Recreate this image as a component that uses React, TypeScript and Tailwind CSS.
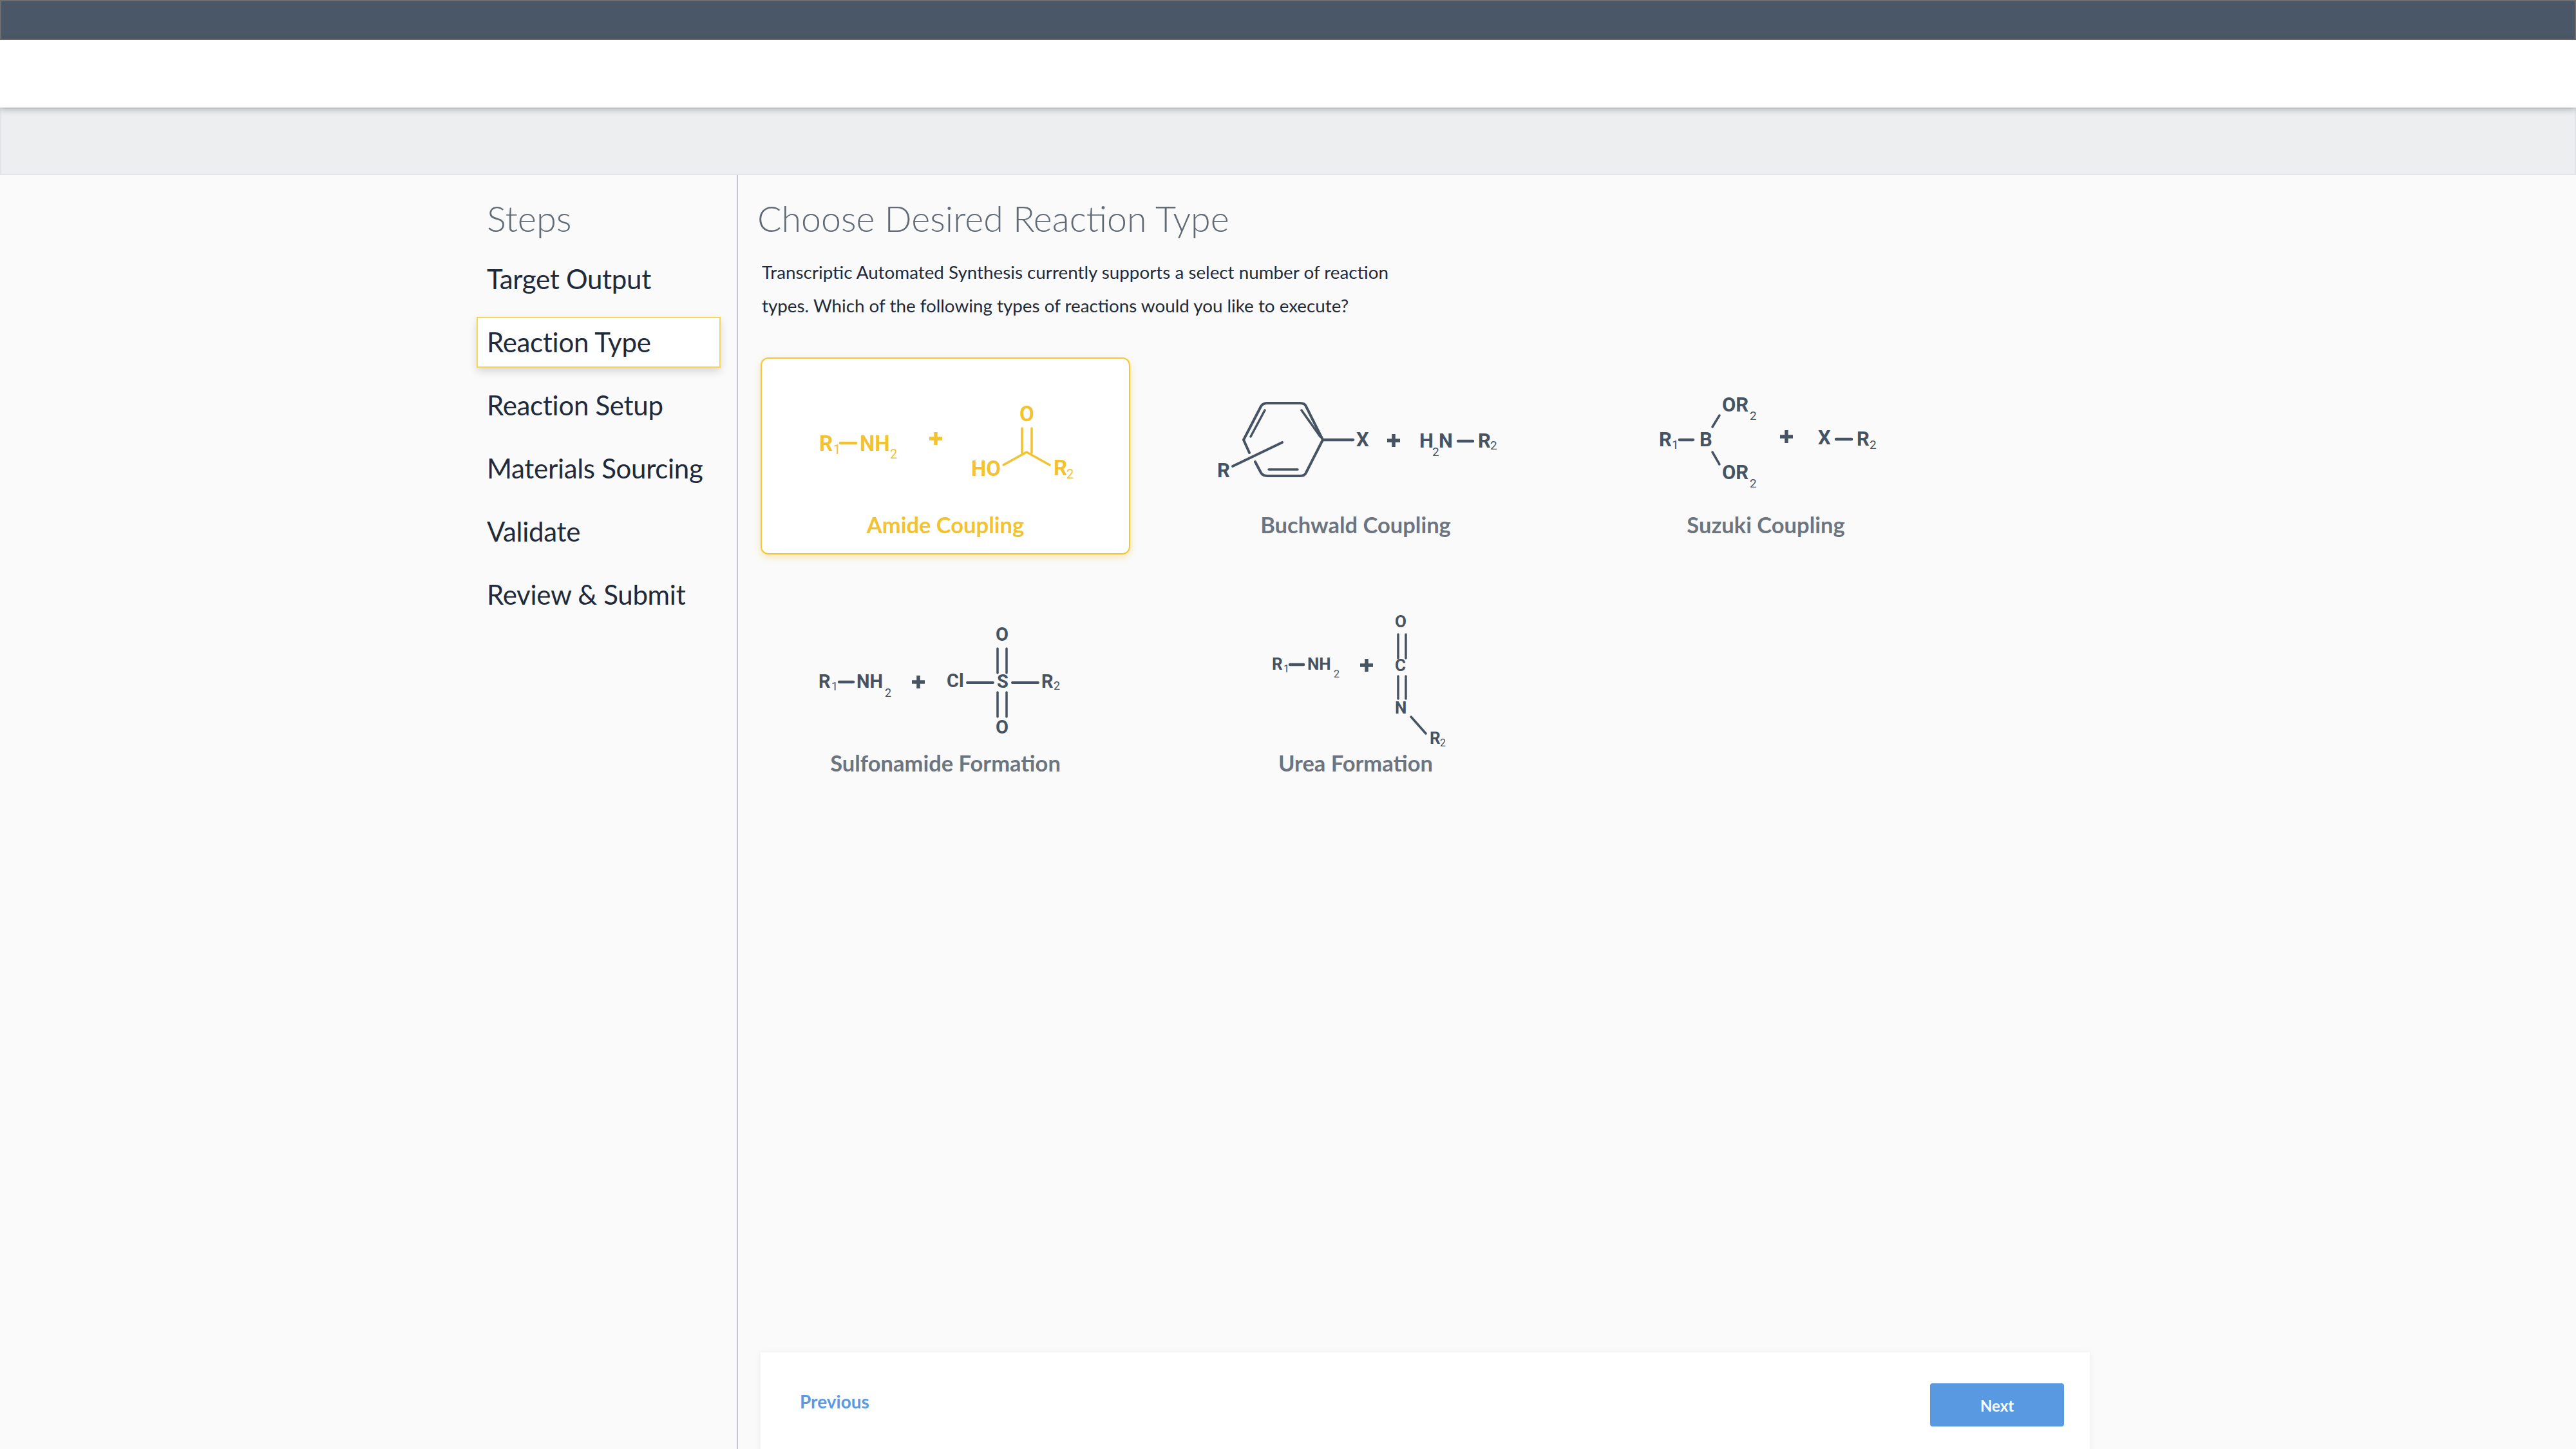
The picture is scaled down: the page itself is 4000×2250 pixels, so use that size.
const steps = ['Target Output', 'Reaction Type', 'Reaction Setup', 'Materials Sourcing', 'Validate', 'Review & Submit'];

type Lab = [string, number, number, number?];

// chem labels: [text, x, y, size]; bonds are plain svg lines
const Chem = ({ labels, size, children }: { labels: Lab[]; size: number; children: React.ReactNode }) => (
  <svg width="570" height="236" viewBox="2 3 570 236" stroke="currentColor" fill="none" strokeLinecap="round" strokeLinejoin="round" strokeWidth="3.5">
    {children}
    {labels.map(([t, x, y, s], i) => (
      <text key={i} x={x} y={y} fontSize={s ?? size} fontWeight={s ? 400 : 700} fill="currentColor" stroke="none" textAnchor="start" className="font-['Roboto',sans-serif]">
        {t}
      </text>
    ))}
  </svg>
);

const Plus = ({ x, y, r = 10 }: { x: number; y: number; r?: number }) => (
  <path d={`M${x - r} ${y}H${x + r}M${x} ${y - r}V${y + r}`} strokeWidth="5.5" strokeLinecap="butt" />
);

const Amide = () => (
  <Chem size={33} labels={[['R', 91, 146], ['1', 113, 151, 20], ['NH', 154, 146], ['2', 201, 158, 20], ['O', 402, 100], ['HO', 327, 185], ['R', 455, 184], ['2', 475, 189, 20]]}>
    <path d="M124 134H148" strokeWidth="4.5" />
    <Plus x={272} y={127} />
    <path d="M406 111V149M421 111V149M377 168L413 148L449 168" strokeWidth="3.5" />
  </Chem>
);

const Buchwald = () => (
  <Chem size={31} labels={[['R', 72, 187], ['X', 288, 139], ['H', 386, 141], ['2', 406, 154, 19], ['N', 416, 141], ['R', 477, 141], ['2', 496, 144, 19]]}>
    <path d="M122 149L113 129L140 77Q143 72 150 72H201Q208 72 210 77L236 129L210 180Q208 185 201 185H150Q143 185 140 180L131 163" strokeWidth="4" />
    <path d="M146 83L124 124M203 83L232 124M152 175H197" strokeWidth="3.5" />
    <path d="M173 133L96 170" strokeWidth="4" />
    <path d="M236 129H283" strokeWidth="4.5" />
    <Plus x={346} y={130} />
    <path d="M446 131H469" strokeWidth="4.5" />
  </Chem>
);

const Suzuki = () => (
  <Chem size={31} labels={[['R', 121, 139], ['1', 141, 143, 19], ['B', 184, 139], ['OR', 219, 85], ['2', 262, 98, 19], ['OR', 219, 190], ['2', 262, 203, 19], ['X', 368, 136], ['R', 428, 138], ['2', 448, 143, 19]]}>
    <path d="M153 129H174M396 128H420" strokeWidth="4.5" />
    <path d="M215 91L204 109M204 148L215 167" />
    <Plus x={319} y={124} />
  </Chem>
);

const Sulfonamide = () => (
  <Chem size={29} labels={[['R', 90, 144], ['1', 110, 148, 18], ['NH', 149, 144], ['2', 193, 158, 18], ['Cl', 289, 143], ['S', 367, 144], ['R', 436, 144], ['2', 455, 147, 18], ['O', 365, 71], ['O', 365, 215]]}>
    <path d="M122 135H144" strokeWidth="4.5" />
    <Plus x={245} y={135} />
    <path d="M321 136H361M391 136H431" strokeWidth="4" />
    <path d="M368 83V121M382 83V121M368 151V189M382 151V189" />
  </Chem>
);

const Urea = () => (
  <Chem size={26} labels={[['R', 157, 116], ['1', 175, 120, 16], ['NH', 212, 116], ['2', 253, 128, 16], ['O', 348, 50], ['C', 348, 118], ['N', 348, 184], ['R', 402, 231], ['2', 418, 235, 16]]}>
    <path d="M185 108H206" strokeWidth="4.5" />
    <Plus x={304} y={109} />
    <path d="M353 61V98M365 61V98M353 126V161M365 126V161M373 189L396 215" />
  </Chem>
);

const reactions = [
  { name: 'Amide Coupling', Drawing: Amide, active: true },
  { name: 'Buchwald Coupling', Drawing: Buchwald, active: false },
  { name: 'Suzuki Coupling', Drawing: Suzuki, active: false },
  { name: 'Sulfonamide Formation', Drawing: Sulfonamide, active: false },
  { name: 'Urea Formation', Drawing: Urea, active: false },
];

export default function App() {
  return (
    <div className="h-[2250px] overflow-hidden bg-[#fafafa] font-['Lato',sans-serif]">
      <div className="h-[62px] bg-[#4a5766] border-2 border-[#6e6e70]" />
      <div className="relative z-10 h-[105px] bg-white shadow-[0_3px_10px_rgba(0,0,0,0.25)]" />
      <div className="h-[105px] bg-[#edeef0] border-2 border-[#e3e4e7]" />

      <div className="flex">
        {/* Steps sidebar */}
        <aside className="w-[1146px] h-[1978px] border-r-2 border-[#c4c8cd] pl-[740px] pr-[25px] pt-[32px]">
          <h2 className="h-[70px] pl-[16px] mb-[20px] text-[56px] leading-[70px] font-light text-[#626b75]">Steps</h2>
          <div className="flex flex-col gap-[19px]">
            {steps.map((step) => {
              const active = step === 'Reaction Type';
              return (
                <div
                  key={step}
                  className={`h-[79px] px-[14px] border-2 whitespace-nowrap text-[42px] tracking-[-0.3px] leading-[75px] text-[#1f2a3a] ${
                    active ? 'border-[#f6d65a] bg-white shadow-[0_6px_12px_rgba(0,0,0,0.14)]' : 'border-transparent'
                  }`}
                >
                  {step}
                </div>
              );
            })}
          </div>
        </aside>

        {/* Reaction chooser */}
        <main className="flex-1 pl-[30px] pt-[32px]">
          <h1 className="h-[70px] text-[55.5px] leading-[70px] font-light text-[#626b75]">Choose Desired Reaction Type</h1>
          <p className="w-[1005px] ml-[7px] mt-[23px] text-[27.8px] leading-[52px] text-[#1f2a3a]">
            Transcriptic Automated Synthesis currently supports a select number of reaction types. Which of the following types of reactions would you like to execute?
          </p>

          <div className="grid grid-cols-[574px_574px_574px] gap-x-[63px] gap-y-[64px] ml-[5px] mt-[54px]">
            {reactions.map(({ name, Drawing, active }) => (
              <div
                key={name}
                className={`h-[306px] rounded-[12px] border-2 ${
                  active
                    ? 'border-[#f3c738] bg-white text-[#f2c230] shadow-[0_4px_12px_rgba(242,194,48,0.35)]'
                    : 'border-transparent text-[#465362]'
                }`}
              >
                <Drawing />
                <div className={`h-[44px] text-center text-[34.5px] leading-[44px] font-bold ${active ? 'text-[#f2c230]' : 'text-[#6c757f]'}`}>{name}</div>
              </div>
            ))}
          </div>

          {/* Wizard footer */}
          <div className="w-[2064px] h-[300px] ml-[5px] mt-[869px] bg-white shadow-[0_0_10px_rgba(0,0,0,0.06)] flex items-start justify-between pl-[61px] pr-[40px] pt-[48px]">
            <a className="mt-[9px] text-[28px] leading-[38px] font-bold text-[#5b9ae2]">Previous</a>
            <button className="w-[208px] h-[67px] rounded-[4px] bg-[#5899e2] text-white text-[24px] font-bold pt-[3px]">Next</button>
          </div>
        </main>
      </div>
    </div>
  );
}
